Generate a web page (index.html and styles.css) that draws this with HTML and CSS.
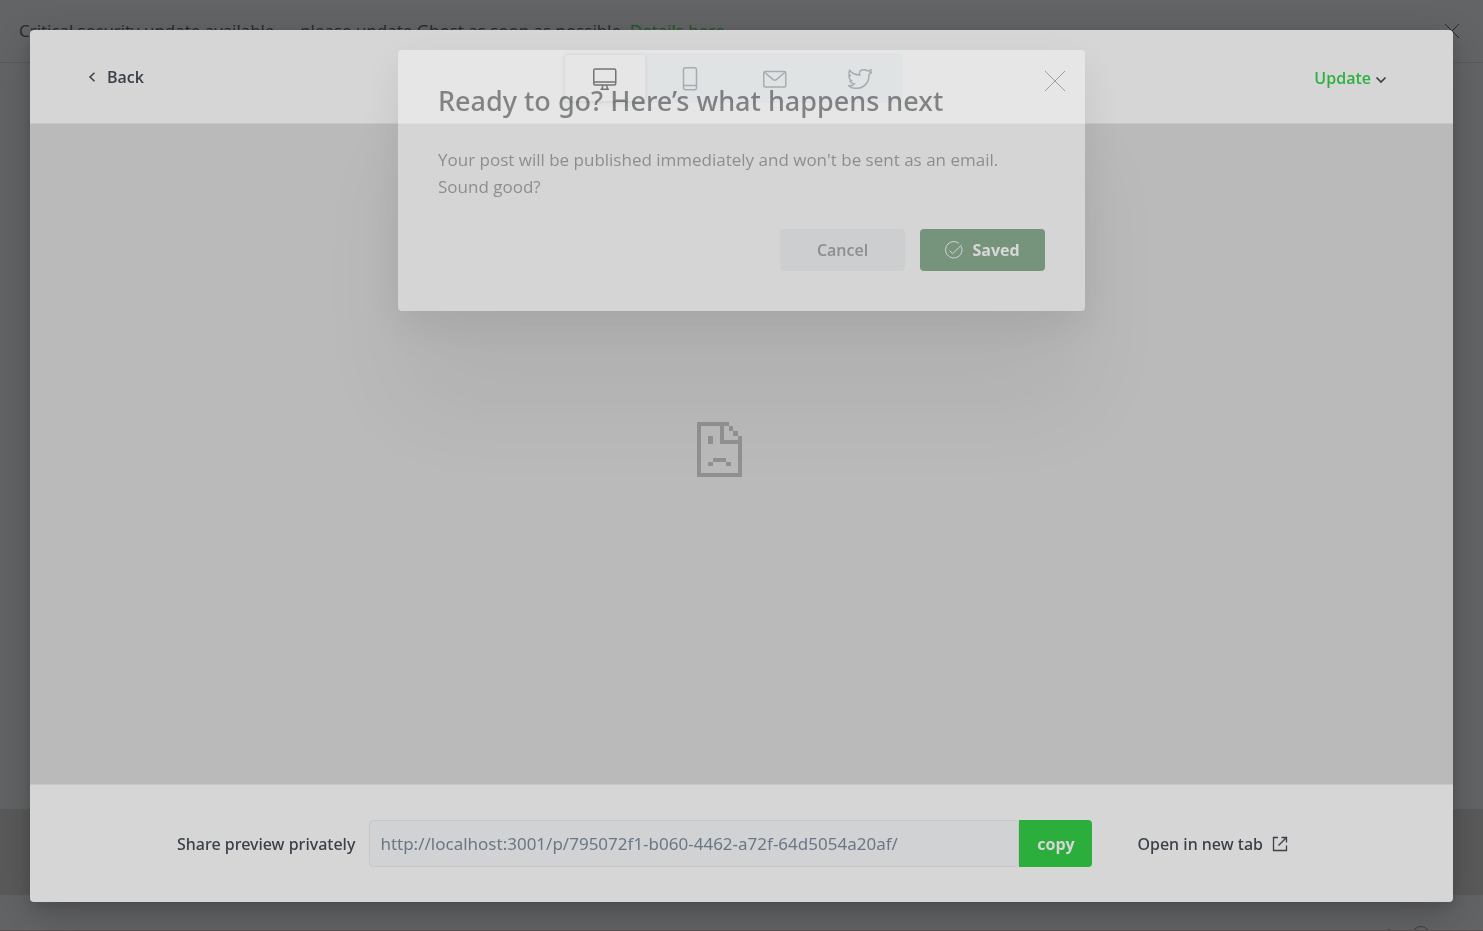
FILE: index.html
```html
<!DOCTYPE html>
<html lang="en">
<head>
<meta charset="utf-8">
<meta name="viewport" content="width=device-width, initial-scale=1">
<title>Preview post</title>
<link rel="stylesheet" href="styles.css">
</head>
<body>
<div class="page">
  <div class="alert">
    <p class="alert-text">Critical security update available — please update Ghost as soon as possible. <a class="alert-link" href="#">Details here.</a></p>
    <button class="alert-close" type="button" aria-label="Dismiss"><svg width="16" height="16" viewBox="0 0 16 16"><path d="M1 1l14 14M15 1L1 15"/></svg></button>
  </div>
  <div class="page-body">
    <div class="page-strip"></div>
    <div class="page-foot"><svg width="50" height="18" viewBox="0 0 50 18"><path d="M0 12L9 3v12"/><circle cx="41" cy="9" r="8.5"/><path d="M38 8a3 3 0 1 1 3 3v2"/></svg></div>
  </div>
</div>

<main class="preview">
  <header class="preview-header">
    <button class="back" type="button"><svg width="8" height="10" viewBox="0 0 8 10"><path d="M6.5 .8L2 5l4.500 4.200"/></svg><span>Back</span></button>
    <nav class="tabs" aria-label="Preview type">
      <button class="tab tab-active" type="button" aria-label="Desktop"><svg width="24" height="24" viewBox="0 0 24 24"><rect x=".75" y="2" width="22" height="16" rx="1.500"/><path d="M.75 15h22M10 18l-1 4M13.500 18l1 4M7.500 22.200h8.500"/></svg></button>
      <button class="tab" type="button" aria-label="Mobile"><svg width="24" height="24" viewBox="0 0 24 24"><rect x="5.500" y=".75" width="13" height="22" rx="2"/><path d="M5.500 18.500h13"/></svg></button>
      <button class="tab" type="button" aria-label="Email"><svg width="24" height="24" viewBox="0 0 24 24"><rect x=".75" y="4.500" width="22" height="15.500" rx="1.500"/><path d="M1.200 5l8.900 7.600q1.650 1.300 3.300 0L22.300 5"/></svg></button>
      <button class="tab" type="button" aria-label="Twitter"><svg width="24" height="20" viewBox="0 0 72 60"><path stroke-width="4.500" d="M5 4C12 13 22 18 35 18C32 8 38 2 47 2C53 2 56 3 59 6L69 3L66 9L71 10L63 17C64 40 48 58 26 58C16 58 6 55 2 50C8 51 14 50 19 45C12 44 8 41 6 36L10 35C4 31 2 27 3 20L8 21C2 16 2 10 5 4Z"/></svg></button>
    </nav>
    <button class="update" type="button"><span>Update</span><svg width="12" height="8" viewBox="0 0 12 8"><path d="M1.500 1.500L6 6l4.500-4.500"/></svg></button>
  </header>

  <section class="frame" aria-label="Post preview">
    <svg width="45" height="55" viewBox="0 0 45 55" shape-rendering="crispEdges"><path d="M0 0h32v4H0zM0 4h4v51H0zM4 51h41v4H4zM41 14h4v37h-4zM23 4h4v18h-4zM27 18h14v4H27zM32 4h4v5h-4zM36 9h5v5h-5zM11 14h5v8h-5zM16 36h13v4H16zM11 40h5v4h-5zM29 40h5v4h-5z"/></svg>
  </section>

  <footer class="share">
    <label class="share-label" for="share-url">Share preview privately</label>
    <div class="share-group">
      <input class="share-input" id="share-url" type="text" readonly value="http://localhost:3001/p/795072f1-b060-4462-a72f-64d5054a20af/">
      <button class="copy" type="button">copy</button>
    </div>
    <a class="open-link" href="#"><span>Open in new tab</span><svg width="16" height="16" viewBox="0 0 16 16"><path d="M6 1.500H1.500v13h13V9.500M9.500 1.500h5v5M14.500 1.500L6.500 9.500"/></svg></a>
  </footer>
</main>

<div class="dialog-layer">
  <section class="dialog" role="dialog" aria-labelledby="dialog-title">
    <h1 class="dialog-title" id="dialog-title">Ready to go? Here’s what happens next</h1>
    <button class="dialog-close" type="button" aria-label="Close"><svg width="22" height="22" viewBox="0 0 22 22"><path d="M1 1l20 20M21 1L1 21"/></svg></button>
    <p class="dialog-text">Your post will be published immediately and won't be sent as an email. Sound good?</p>
    <div class="dialog-actions">
      <button class="button button-cancel" type="button">Cancel</button>
      <button class="button button-saved" type="button"><svg width="18" height="18" viewBox="0 0 18 18"><path d="M16.300 5.500A8.200 8.200 0 1 1 13.800 2.300M4.500 9.500l3.200 3.200L16.500 4"/></svg><span>Saved</span></button>
    </div>
  </section>
</div>
</body>
</html>
```
FILE: styles.css
```css
* {
  box-sizing: border-box;
}

body {
  margin: 0;
  height: 100vh;
  overflow: hidden;
  background: #636466;
  color: #394047;
  font-family: "Open Sans", "Noto Sans", sans-serif;
  font-size: 17px;
}

button,
input {
  margin: 0;
  padding: 0;
  border: 0;
  background: none;
  color: inherit;
  font: inherit;
}

svg {
  display: block;
  flex: none;
  fill: none;
  stroke: currentColor;
}

a {
  color: inherit;
  text-decoration: none;
}

/* Page behind the preview */
.page {
  display: flex;
  flex-direction: column;
  height: 100vh;
  border-bottom: 1px solid #5b5053;
}

.alert {
  display: flex;
  align-items: center;
  justify-content: space-between;
  height: 63px;
  padding: 0 23px 1px 19px;
  border-bottom: 1px solid #57595b;
  color: #25282c;
}

.alert-text {
  margin: 0;
}

.alert-link {
  color: #1b5527;
}

.page-body {
  display: flex;
  flex: 1;
  flex-direction: column;
  justify-content: flex-end;
  min-height: 0;
}

.page-strip {
  height: 86px;
  background: #5a5a5b;
}

.page-foot {
  display: flex;
  justify-content: flex-end;
  height: 35px;
  padding: 31px 53px 0 0;
  overflow: hidden;
  color: #3b3e42;
}

/* Preview window */
.preview {
  position: fixed;
  inset: 30px 30px 29px;
  display: flex;
  flex-direction: column;
  border-radius: 4px;
  background: #d6d6d6;
  box-shadow: 0 14px 40px rgba(0, 0, 0, 0.2), 0 4px 14px rgba(0, 0, 0, 0.12);
}

.preview-header {
  display: flex;
  align-items: center;
  justify-content: space-between;
  padding: 23px 66px 20px 57px;
  border-bottom: 1px solid #c8c9ca;
}

.back,
.update {
  display: flex;
  align-items: center;
  font-weight: 600;
  font-size: 16px;
}

.back {
  gap: 11px;
  padding: 0 7px 2px 1px;
}

.back svg {
  stroke-width: 1.5;
}

.update {
  gap: 4px;
}

.update span {
  color: #2eb140;
}

.update svg {
  margin-top: 4px;
  stroke-width: 1.7;
}

.tabs {
  display: flex;
  padding: 2px 0 2px 2px;
  border-radius: 4px;
  background: #cdd1d3;
}

.tab {
  display: flex;
  align-items: center;
  justify-content: center;
  width: 85px;
  height: 46px;
  padding-top: 2px;
  color: #66747f;
}

.tab svg {
  stroke-width: 1.5;
}

.tab-active {
  width: 80px;
  margin-right: 3px;
  border-radius: 4px;
  background: #d6d6d6;
  box-shadow: 0 1px 5px rgba(0, 0, 0, 0.14);
  color: #101214;
}

.frame {
  display: flex;
  flex: 1;
  align-items: center;
  justify-content: center;
  padding: 0 44px 10px 0;
  background: #bababa;
}

.frame svg {
  fill: #919191;
  stroke: none;
}

.share {
  display: flex;
  align-items: center;
  padding: 35px 165px 35px 147px;
  border-top: 1px solid #c8c9ca;
}

.share-label {
  font-family: "Noto Sans", sans-serif;
  font-size: 16px;
  font-weight: 500;
  white-space: nowrap;
}

.share-group {
  display: flex;
  flex: 1;
  margin: 0 45px 0 14px;
}

.share-input {
  flex: 1;
  min-width: 0;
  height: 47px;
  padding: 0 10px;
  border: 1px solid #c5c7cc;
  border-radius: 4px;
  background: #d1d2d4;
  color: #6a7885;
  font-family: "Noto Sans", sans-serif;
}

.copy {
  width: 73px;
  border-radius: 0 4px 4px 0;
  background: #2cae3d;
  color: #d6d6d6;
  font-size: 16px;
  font-weight: 700;
}

.open-link {
  display: flex;
  align-items: center;
  gap: 9px;
  font-family: "Noto Sans", sans-serif;
  font-size: 16px;
  font-weight: 500;
  white-space: nowrap;
}

.open-link svg {
  stroke-width: 1.3;
}

/* Confirmation dialog, part-way through its fade */
.dialog-layer {
  position: fixed;
  inset: 50px 0 auto;
  display: flex;
  justify-content: center;
  opacity: 0.42;
}

.dialog {
  display: grid;
  grid-template-columns: 1fr auto;
  width: 687px;
  max-width: 90vw;
  padding: 32px 40px 40px;
  border-radius: 4px;
  background: #fcfcfc;
  box-shadow: 0 100px 100px rgba(0, 0, 0, 0.12), 0 14px 40px rgba(0, 0, 0, 0.18);
}

.dialog-title {
  margin: 0;
  color: #0d0f11;
  font-family: "Noto Sans", sans-serif;
  font-size: 27px;
  font-weight: 500;
  line-height: 38px;
}

.dialog-close {
  align-self: start;
  justify-self: end;
  margin: -12px -21px 0 0;
  color: #4a5259;
}

.dialog-text {
  grid-column: 1 / -1;
  margin: 26px 0 29px;
  color: #4a5259;
  font-size: 17px;
  line-height: 27px;
}

.dialog-actions {
  display: flex;
  grid-column: 1 / -1;
  gap: 15px;
  justify-content: flex-end;
}

.button {
  display: flex;
  align-items: center;
  justify-content: center;
  gap: 9px;
  width: 125px;
  height: 42px;
  border-radius: 4px;
  font-size: 16px;
  font-weight: 600;
}

.button-cancel {
  background: #e7ebef;
  color: #4a5259;
}

.button-saved {
  background: #1b5e29;
  color: #ffffff;
  font-weight: 700;
}
```
